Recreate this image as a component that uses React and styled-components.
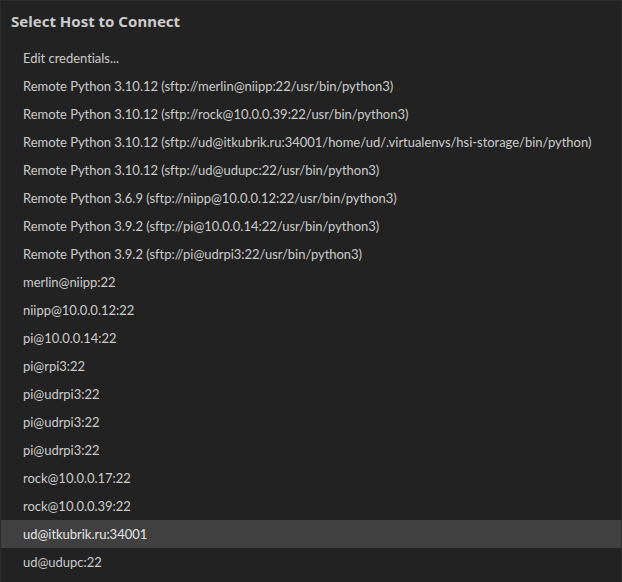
import React from 'react';
import styled, { createGlobalStyle } from 'styled-components';

const GlobalStyle = createGlobalStyle`
    html, body {
        margin: 0;
        padding: 0;
        background: #222222;
    }
`;

const PanelStyled = styled.div`
    box-sizing: border-box;
    width: 622px;
    height: 582px;
    overflow: hidden;
    background: #222222;
    border: 1px solid #2c2c2c;
    border-bottom: none;
    font-family: "Noto Sans", "Open Sans", sans-serif;
    color: #cccccc;
    display: flex;
    flex-direction: column;
`;

const TitleStyled = styled.div`
    font-size: 15px;
    font-weight: 700;
    padding: 9px 10px 0;
    height: 33px;
    line-height: 22px;
    box-sizing: border-box;
    color: #cccccc;
`;

const ListStyled = styled.ul`
    list-style: none;
    margin: 10px 0 0;
    padding: 0;
`;

const RowStyled = styled.li`
    height: 28px;
    line-height: 28px;
    padding-left: 22px;
    font-family: Lato, "Noto Sans", sans-serif;
    font-size: 13px;
    letter-spacing: -0.03px;
    white-space: nowrap;
    background: ${props => props.selected ? '#404040' : 'transparent'};
    color: ${props => props.selected ? '#e6e6e6' : '#cccccc'};
`;

const items = [
    'Edit credentials...',
    'Remote Python 3.10.12 (sftp://merlin@niipp:22/usr/bin/python3)',
    'Remote Python 3.10.12 (sftp://rock@10.0.0.39:22/usr/bin/python3)',
    'Remote Python 3.10.12 (sftp://ud@itkubrik.ru:34001/home/ud/.virtualenvs/hsi-storage/bin/python)',
    'Remote Python 3.10.12 (sftp://ud@udupc:22/usr/bin/python3)',
    'Remote Python 3.6.9 (sftp://niipp@10.0.0.12:22/usr/bin/python3)',
    'Remote Python 3.9.2 (sftp://pi@10.0.0.14:22/usr/bin/python3)',
    'Remote Python 3.9.2 (sftp://pi@udrpi3:22/usr/bin/python3)',
    'merlin@niipp:22',
    'niipp@10.0.0.12:22',
    'pi@10.0.0.14:22',
    'pi@rpi3:22',
    'pi@udrpi3:22',
    'pi@udrpi3:22',
    'pi@udrpi3:22',
    'rock@10.0.0.17:22',
    'rock@10.0.0.39:22',
    'ud@itkubrik.ru:34001',
    'ud@udupc:22',
];

const App = () => (
    <>
        <GlobalStyle />
        <PanelStyled>
            <TitleStyled>Select Host to Connect</TitleStyled>
            <ListStyled>
                {items.map((item, i) => (
                    <RowStyled key={i} selected={item === 'ud@itkubrik.ru:34001'}>
                        {item}
                    </RowStyled>
                ))}
            </ListStyled>
        </PanelStyled>
    </>
);

export default App;
